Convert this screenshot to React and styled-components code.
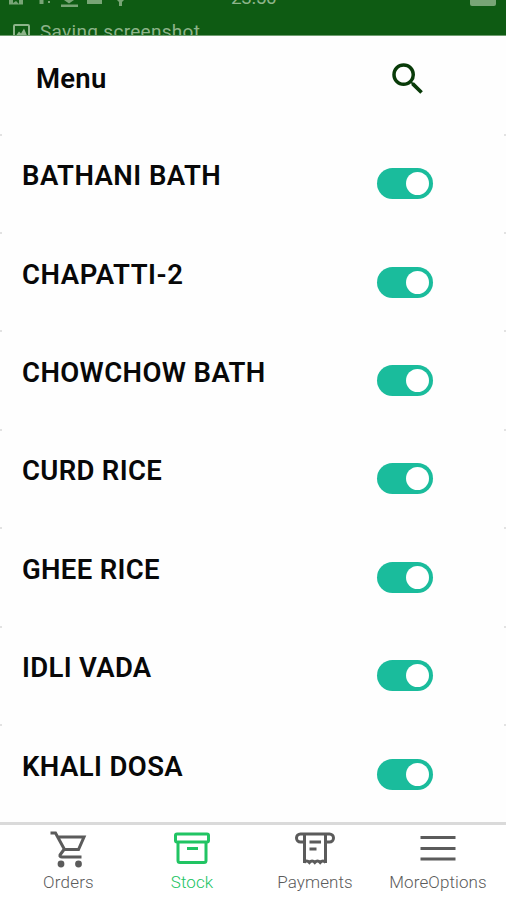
import React from 'react';
import styled, { createGlobalStyle } from 'styled-components';

const Global = createGlobalStyle`
  * { box-sizing: border-box; }
  body { margin: 0; background: #fff; font-family: Roboto, "Liberation Sans", sans-serif; }
`;
const Screen = styled.main`
  width: 506px; height: 900px; overflow: hidden;
  display: flex; flex-direction: column; background: #fefefe; color: #080808;
`;
const StatusBar = styled.header`
  height: 36px; flex: none; overflow: hidden; background: #0e5b13; color: #8db48a;
  border-bottom: 1px solid #6f9d70;
`;
const StatusRow = styled.div`
  display: grid; grid-template-columns: 231px 1fr 36px; height: 8px;
`;
const StatusIcons = styled.svg`
  display: block; width: 231px; height: 8px;
`;
const Clock = styled.span`
  font-size: 19px; line-height: 20px; margin-top: -12px; letter-spacing: -0.4px;
`;
const Battery = styled.span`
  width: 26px; height: 6px; border-radius: 0 0 2px 2px; background: #78a576;
`;
const Notice = styled.div`
  display: flex; gap: 10px; padding: 13px 0 0 13px; height: 40px;
  font-size: 19px; line-height: 22px;
`;
const NoticeIcon = styled.svg`
  width: 17px; height: 17px; margin-top: 3px; flex: none;
`;
const NoticeText = styled.span`
  letter-spacing: 0.3px;
`;
const TitleBar = styled.div`
  height: 97.6px; flex: none; display: grid; grid-template-columns: 1fr 118px;
  padding-left: 36px;
`;
const Title = styled.h1`
  margin: 26px 0 0; font-size: 27.5px; font-weight: 600; line-height: 34px; letter-spacing: 0.25px;
`;
const SearchIcon = styled.svg`
  width: 42px; height: 42px; margin: 22px 0 0 -1px; fill: #093b09;
`;
const List = styled.ul`
  list-style: none; margin: 0; padding: 0; height: 688px; flex: none; overflow: hidden;
`;
const Row = styled.li`
  height: 98.42px; display: grid; grid-template-columns: 1fr 129px; padding-left: 22px;
  background:
    linear-gradient(#e2e2e2, #e2e2e2) 0 0 / 2px 2px no-repeat,
    linear-gradient(#e2e2e2, #e2e2e2) 100% 0 / 2px 2px no-repeat;
`;
const ItemName = styled.span`
  margin-top: 25.5px; font-size: 27.5px; font-weight: 600; line-height: 34px;
  letter-spacing: ${p => p.$spacing || 0}px; white-space: nowrap;
`;
const Toggle = styled.button`
  width: 56px; height: 31px; margin: 34.5px 0 0 0.4px; padding: 4px; border: 0;
  border-radius: 16px; background: #1abc9c; display: flex; justify-content: flex-end;
`;
const Knob = styled.span`
  width: 23px; height: 23px; border-radius: 50%; background: #fff;
`;
const TabBar = styled.nav`
  height: 79px; flex: none; border-top: 3px solid #dadada; display: grid;
  grid-template-columns: 137px 110px 136px 110px; background: #fff;
`;
const Tab = styled.button`
  border: 0; padding: 0; background: none; font: inherit; display: flex;
  flex-direction: column; align-items: center; color: ${p => p.$active ? '#21c463' : '#5b5b5b'};
`;
const TabIcon = styled.svg`
  width: 42px; height: 42px; margin-top: 3px; fill: none; stroke: currentColor; stroke-width: 3;
  flex: none;
`;
const TabLabel = styled.span`
  font-size: 17px; line-height: 20px; margin-top: 2.4px; white-space: nowrap; font-weight: 300;
  letter-spacing: ${p => p.$spacing || 0}px;
`;

const items = [
  ['BATHANI BATH', 0.45], ['CHAPATTI-2', 0.55], ['CHOWCHOW BATH', 0.4], ['CURD RICE', 0.32],
  ['GHEE RICE', 0.32], ['IDLI VADA', 0.32], ['KHALI DOSA', 0.4],
];

const CartGlyph = () => (
  <>
    <path d="M2.5 5H7.500l9 16.500h14L36 9H9.500M16 21.500l-4 5.500q-.5 2 2 2h19.500" />
    <circle cx="13" cy="36" r="3.400" fill="currentColor" stroke="none" />
    <circle cx="30.500" cy="36" r="3.400" fill="currentColor" stroke="none" />
  </>
);
const BoxGlyph = () => (
  <>
    <rect x="4.500" y="6" width="33" height="8" rx="1.500" />
    <path d="M7 14v18.500q0 2 2 2h24q2 0 2-2V14M16 20.500h11" />
  </>
);
const ReceiptGlyph = () => (
  <>
    <path d="M11 14H6.500A3.800 3.800 0 0 1 6.500 6H35.500A3.800 3.800 0 0 1 35.500 14H31M10.500 7v28M31.500 7v28" />
    <path d="M10 34.500q2.700-3 5.400 0q2.700-3 5.400 0q2.700-3 5.400 0q2.700-3 5.400 0" />
    <path d="M15.500 14h11.500M15.500 21h7" strokeWidth="2.800" />
  </>
);
const MenuGlyph = () => <path d="M3.500 9.500h35M3.500 20.500h35M3.500 31h35" />;

const tabs = [
  ['Orders', CartGlyph, 0.2], ['Stock', BoxGlyph, 0.1],
  ['Payments', ReceiptGlyph, 0.1], ['MoreOptions', MenuGlyph, 0.1],
];

export default function App() {
  return (
    <Screen>
      <Global />
      <StatusBar>
        <StatusRow>
          <StatusIcons viewBox="0 0 231 8" fill="#78a576">
            <path d="M9 0h4v3l3-2 3 3V0h4v4.500H9zM39.500 0h4v4h-4zM48 1h2v2h-2zM61 4.500h17v2.500H61zM64 0h10l-5 3.500zM87 0h15v4H87zM117 0h7l-2 2v4h-3V2z" />
          </StatusIcons>
          <Clock>23:50</Clock>
          <Battery />
        </StatusRow>
        <Notice>
          <NoticeIcon viewBox="0 0 17 17">
            <rect x="1" y="1" width="15" height="15" rx="1" fill="none" stroke="currentColor" strokeWidth="2" />
            <path d="m3 11.500 3-4 2 2 3-5 3 7z" fill="currentColor" />
          </NoticeIcon>
          <NoticeText>Saving screenshot</NoticeText>
        </Notice>
      </StatusBar>
      <TitleBar>
        <Title>Menu</Title>
        <SearchIcon viewBox="0 0 24 24">
          <path d="M15.500 14h-.79l-.28-.27A6.471 6.471 0 0 0 16 9.500 6.500 6.500 0 1 0 9.500 16c1.610 0 3.090-.59 4.230-1.570l.27.28v.79l5 4.990L20.490 19l-4.990-5zm-6 0C7.010 14 5 11.990 5 9.500S7.010 5 9.500 5 14 7.010 14 9.500 11.990 14 9.500 14z" />
        </SearchIcon>
      </TitleBar>
      <List>
        {items.map(([name, spacing]) => (
          <Row key={name}>
            <ItemName $spacing={spacing}>{name}</ItemName>
            <Toggle aria-label={name}><Knob /></Toggle>
          </Row>
        ))}
      </List>
      <TabBar>
        {tabs.map(([label, Glyph, spacing]) => (
          <Tab key={label} $active={label === 'Stock'}>
            <TabIcon viewBox="0 0 42 42"><Glyph /></TabIcon>
            <TabLabel $spacing={spacing}>{label}</TabLabel>
          </Tab>
        ))}
      </TabBar>
    </Screen>
  );
}
